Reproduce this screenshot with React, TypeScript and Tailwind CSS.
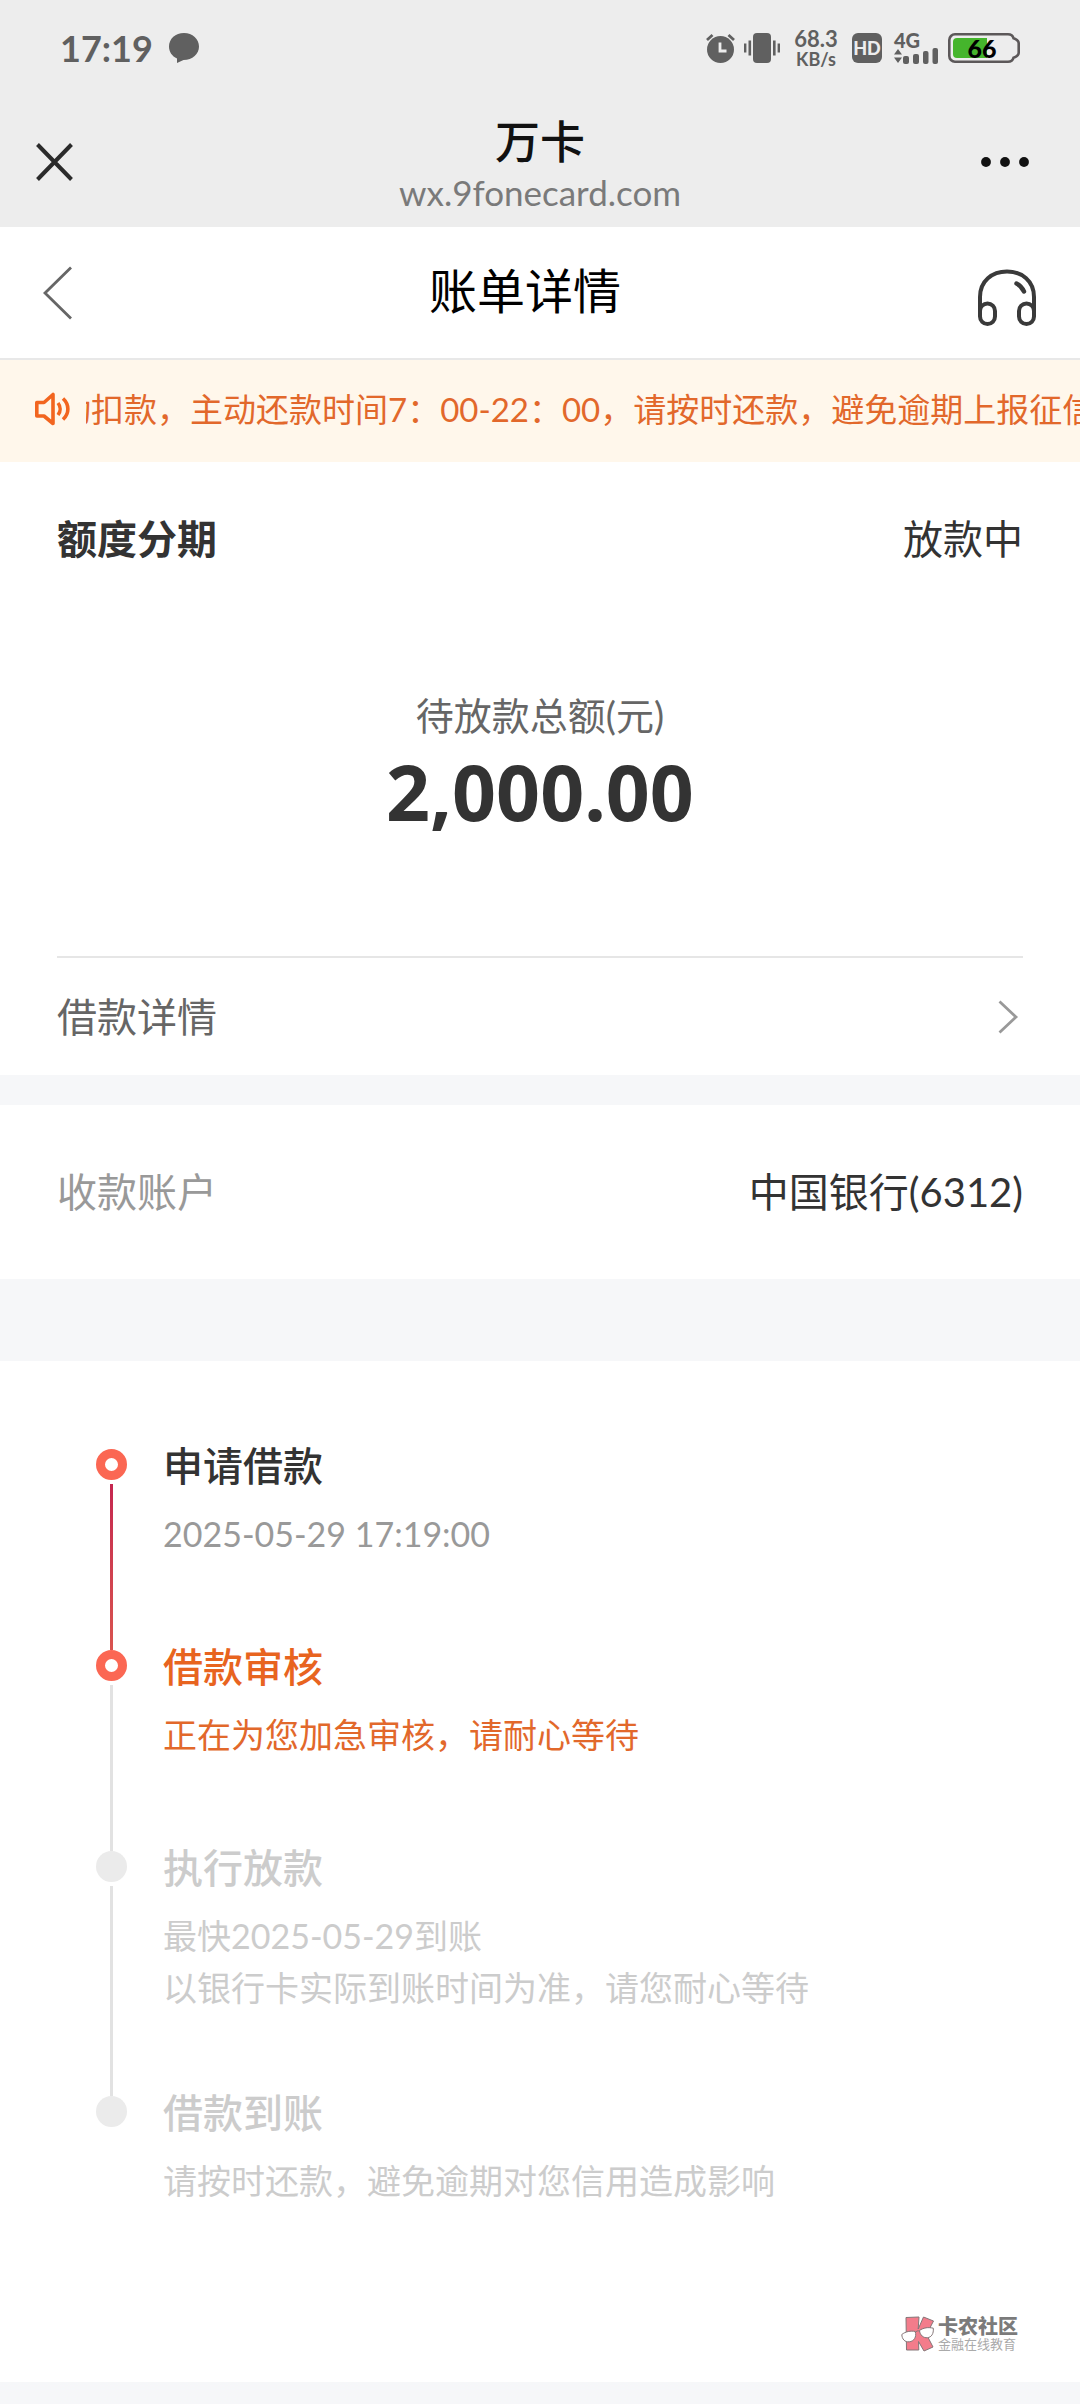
import clsx from "clsx";

type Step = {
  title: string;
  lines: string[];
  state: "done" | "current" | "pending";
};

const steps: Step[] = [
  { title: "申请借款", lines: ["2025-05-29 17:19:00"], state: "done" },
  { title: "借款审核", lines: ["正在为您加急审核，请耐心等待"], state: "current" },
  {
    title: "执行放款",
    lines: ["最快2025-05-29到账", "以银行卡实际到账时间为准，请您耐心等待"],
    state: "pending",
  },
  {
    title: "借款到账",
    lines: ["请按时还款，避免逾期对您信用造成影响"],
    state: "pending",
  },
];

function StatusBar() {
  return (
    <div className="flex h-24 items-center justify-between px-[60px] text-[#606060]">
      <div className="flex items-center gap-4">
        <span className="text-[36px] leading-[48px] font-bold">17:19</span>
        <svg width="30" height="30" viewBox="0 0 30 30" fill="currentColor">
          <path d="M15 0C6.500 0 0 5.800 0 13.500c0 5.500 3 9.600 8 12V30l6.500-3C23.500 27 30 21 30 13.500S23.500 0 15 0Z" />
        </svg>
      </div>

      <div className="flex items-center">
        <svg width="29" height="30" viewBox="0 0 29 30" className="mr-[9px]" fill="currentColor">
          <circle cx="14.500" cy="16.500" r="13.500" />
          <path d="M1 7 6.500 2M22.500 2 28 7" stroke="currentColor" strokeWidth="2.800" />
          <path d="M14 9.500V18h6.500" fill="none" stroke="#ededed" strokeWidth="2.800" />
        </svg>
        <svg width="36" height="30" viewBox="0 0 36 30" className="mr-3" fill="currentColor">
          <rect x="9" y="0" width="18" height="30" rx="4" />
          <rect x="0" y="10.500" width="2.400" height="9" />
          <rect x="4.500" y="7.500" width="2.600" height="15" />
          <rect x="29" y="7.500" width="2.600" height="15" />
          <rect x="33.600" y="10.500" width="2.400" height="9" />
        </svg>
        <div className="mr-3 flex w-12 flex-col items-center font-bold">
          <span className="text-[22px] leading-[22px]">68.3</span>
          <span className="text-[18px] leading-[18px]">KB/s</span>
        </div>
        <span className="mr-3 flex size-[30px] items-center justify-center rounded-md bg-[#606060] text-[18px] leading-5 font-black text-[#ededed]">
          HD
        </span>
        <div className="mr-[10px] flex w-11 flex-col">
          <span className="text-[20px] leading-4 font-black">4G</span>
          <svg width="44" height="16" viewBox="0 0 44 16" fill="currentColor">
            <path d="M0 6.500 4 1l4 5.500ZM0 9.500h8L4 15Z" />
            <rect x="9" y="8" width="6" height="8" rx="2" />
            <rect x="19" y="6" width="6" height="10" rx="2" />
            <rect x="29" y="3" width="5.500" height="13" rx="2" />
            <rect x="38.500" y="0" width="5.500" height="16" rx="2" />
          </svg>
        </div>
        <div className="relative">
          <svg width="72" height="30" viewBox="0 0 72 30" fill="none">
            <path
              d="M7 1.300H60c3 0 5 2 5.500 4 3 1 5.200 1.800 5.200 5v9.400c0 3.200-2.200 4-5.200 5-.5 2-2.500 4-5.500 4H7a5.700 5.700 0 0 1-5.700-5.700V7A5.700 5.700 0 0 1 7 1.300Z"
              stroke="#5c5859"
              strokeWidth="2.600"
            />
            <path d="M9 5h30v20H9a4 4 0 0 1-4-4V9a4 4 0 0 1 4-4Z" fill="#45b52c" />
          </svg>
          <span className="absolute inset-0 pr-1 text-center text-[25px] leading-[30px] font-black text-black">
            66
          </span>
        </div>
      </div>
    </div>
  );
}

function BrowserBar() {
  return (
    <div className="grid h-[131px] grid-cols-[1fr_auto_1fr] items-center px-9">
      <button type="button" aria-label="关闭" className="w-fit">
        <svg width="37" height="38" viewBox="0 0 37 38" stroke="#2b2b2b" strokeWidth="4">
          <path d="M1.500 1.500 35.500 36.500M35.500 1.500 1.500 36.500" />
        </svg>
      </button>
      <div className="flex flex-col items-center pt-[10px]">
        <span className="text-[45px] leading-[50px] font-medium text-[#111]">万卡</span>
        <span className="text-[35px] leading-[50px] text-[#7a7a7a]">wx.9fonecard.com</span>
      </div>
      <button type="button" aria-label="更多" className="mr-[15px] w-fit justify-self-end">
        <svg width="48" height="10" viewBox="0 0 48 10" fill="#111">
          <circle cx="5" cy="5" r="4.900" />
          <circle cx="24" cy="5" r="4.900" />
          <circle cx="43" cy="5" r="4.900" />
        </svg>
      </button>
    </div>
  );
}

function PageHeader() {
  return (
    <header className="flex h-[133px] items-center border-b-2 border-[#e8e8e8] bg-white pr-11 pl-[43px]">
      <button type="button" aria-label="返回">
        <svg width="29" height="54" viewBox="0 0 29 54" fill="none" stroke="#666" strokeWidth="2.800">
          <path d="M28 1.500 2 27l26 25.500" />
        </svg>
      </button>
      <h1 className="flex-1 pb-1 text-center text-[48px] leading-[60px] text-black">账单详情</h1>
      <button type="button" aria-label="联系客服">
        <svg
          width="58"
          height="66"
          viewBox="0 0 58 66"
          fill="none"
          stroke="#3a3a3a"
          strokeWidth="4"
          strokeLinecap="round"
        >
          <path d="M2 51V37C2 21 14 11.500 29 11.500S56 21 56 37v14" />
          <rect x="2" y="43.500" width="15" height="20.500" rx="7.500" />
          <rect x="41" y="43.500" width="15" height="20.500" rx="7.500" />
          <path d="M38.500 23.500c3 1.400 5.800 4.400 7.500 8" strokeWidth="4.400" />
        </svg>
      </button>
    </header>
  );
}

function Notice() {
  return (
    <div className="flex h-[102px] items-center bg-[#fff7eb] pb-1 pl-[35px] text-[#e2682b]">
      <svg
        width="35"
        height="34"
        viewBox="0 0 35 34"
        fill="none"
        stroke="#f2651f"
        strokeWidth="3.600"
        className="mr-4 shrink-0"
      >
        <path d="M1.800 10.500h7.200L18 2.500v29L9 24H1.800Z" strokeLinejoin="round" />
        <path d="M23 11c2.800 3.500 2.800 8.500 0 12M28 6.500c6.500 6 6.500 15 0 21" />
      </svg>
      {/* scrolling text, clipped on both sides */}
      <div className="flex-1 overflow-hidden">
        <p className="-ml-7 text-[33px] leading-[50px] whitespace-nowrap">
          动扣款，主动还款时间7：00-22：00，请按时还款，避免逾期上报征信
        </p>
      </div>
    </div>
  );
}

function StepItem({ step, last }: { step: Step; last: boolean }) {
  return (
    <li className={clsx("flex gap-9", !last && "min-h-[201px]")}>
      <div className={clsx("flex flex-col items-center gap-1 pt-3", !last && "-mb-3")}>
        <span
          className={clsx(
            "size-[31px] shrink-0 rounded-full",
            step.state === "pending" ? "bg-[#ebebeb]" : "border-9 border-[#fb6753] bg-white",
          )}
        />
        {!last && (
          <span
            className={clsx(
              "w-[3px] flex-1",
              step.state === "done"
                ? "bg-linear-to-b from-[#c5264f] to-[#d9534f]"
                : "bg-[#e2e2e2]",
            )}
          />
        )}
      </div>
      <div className={clsx(!last && "pb-[70px]")}>
        <h2
          className={clsx(
            "mb-[13px] text-[40px] leading-[58px] font-medium",
            step.state === "done" && "text-[#333]",
            step.state === "current" && "text-[#e8641f]",
            step.state === "pending" && "text-[#ccc]",
          )}
        >
          {step.title}
        </h2>
        {step.lines.map((line) => (
          <p
            key={line}
            className={clsx(
              "text-[34px] leading-[52px]",
              step.state === "done" && "text-[#999]",
              step.state === "current" && "text-[#e2682b]",
              step.state === "pending" && "text-[#ccc]",
            )}
          >
            {line}
          </p>
        ))}
      </div>
    </li>
  );
}

function CommunityLogo() {
  return (
    <div className="flex items-center justify-end gap-1 pr-[62px]">
      <svg width="33" height="36" viewBox="0 0 33 36" stroke="#857678" strokeWidth="1">
        <path
          d="M5 1.500 18 1l-.8 12L22.500 1l10 4-7 13.500L32 31l-9 4-5.500-9.500.3 8.500H5.500Z"
          fill="#f37c8b"
        />
        <path
          d="M.8 18.500c3.700-3 9-4 13.500-3 1.500 5.500-1.300 9.800-6 10.300S1 23 .8 18.500ZM18.500 14.500c4-2.800 8.500-3.500 13.800-2.300.5 5.500-1.800 9-5.800 9.500s-7.500-2.500-8-7.200Z"
          fill="#fff"
        />
        <path d="M14.300 16.500c1-1.500 3-2.200 4.200-1.200" fill="none" />
      </svg>
      <div className="flex flex-col">
        <span className="text-[20px] leading-5 font-black text-[#7b7b7b]">卡农社区</span>
        <span className="text-[13px] leading-4 text-[#aaa]">金融在线教育</span>
      </div>
    </div>
  );
}

function App() {
  return (
    <div className="min-h-screen bg-[#f6f7f9] font-['Lato','Noto_Sans_CJK_SC',sans-serif] text-[#333]">
      <div className="bg-[#ededed]">
        <StatusBar />
        <BrowserBar />
      </div>
      <PageHeader />
      <Notice />

      <main>
        <section className="bg-white px-[57px] pt-12">
          <div className="flex justify-between text-[40px] leading-[58px]">
            <span className="font-bold">额度分期</span>
            <span>放款中</span>
          </div>
          <div className="pt-[120px] pb-[114px] text-center">
            <p className="text-[38px] leading-[54px] text-[#666]">待放款总额(元)</p>
            <p className="font-['Noto_Sans',sans-serif] text-[77px] leading-[100px] font-bold">
              2,000.00
            </p>
          </div>
          <button
            type="button"
            className="flex h-[119px] w-full items-center justify-between border-t-2 border-[#e6e6e6] pr-[5px] text-[40px] leading-[58px] text-[#666]"
          >
            借款详情
            <svg width="20" height="34" viewBox="0 0 20 34" fill="none" stroke="#999" strokeWidth="2.800">
              <path d="M1.500 1.500 18 17 1.500 32.500" />
            </svg>
          </button>
        </section>

        <section className="mt-[30px] flex h-[174px] items-center justify-between bg-white px-[57px] text-[40px] leading-[58px]">
          <span className="text-[#999]">收款账户</span>
          <span>中国银行(6312)</span>
        </section>

        <section className="mt-[82px] bg-white pt-[76px] pb-[30px]">
          <ol className="px-24">
            {steps.map((step, i) => (
              <StepItem key={step.title} step={step} last={i === steps.length - 1} />
            ))}
          </ol>
          <div className="pt-[109px]">
            <CommunityLogo />
          </div>
        </section>
      </main>
    </div>
  );
}

export default App;
